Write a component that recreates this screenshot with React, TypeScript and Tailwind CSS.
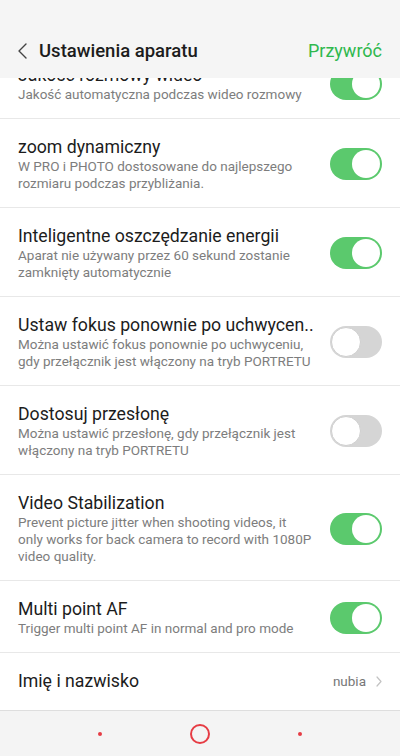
import { FC } from "react";

interface Setting {
  title: string;
  desc: string;
  on: boolean;
}

const SETTINGS: Setting[] = [
  {
    title: "Jakość rozmowy wideo",
    desc: "Jakość automatyczna podczas wideo rozmowy",
    on: true,
  },
  {
    title: "zoom dynamiczny",
    desc: "W PRO i PHOTO dostosowane do najlepszego rozmiaru podczas przybliżania.",
    on: true,
  },
  {
    title: "Inteligentne oszczędzanie energii",
    desc: "Aparat nie używany przez 60 sekund zostanie zamknięty automatycznie",
    on: true,
  },
  {
    title: "Ustaw fokus ponownie po uchwycen..",
    desc: "Można ustawić fokus ponownie po uchwyceniu, gdy przełącznik jest włączony na tryb PORTRETU",
    on: false,
  },
  {
    title: "Dostosuj przesłonę",
    desc: "Można ustawić przesłonę, gdy przełącznik jest włączony na tryb PORTRETU",
    on: false,
  },
  {
    title: "Video Stabilization",
    desc: "Prevent picture jitter when shooting videos, it only works for back camera to record with 1080P video quality.",
    on: true,
  },
  {
    title: "Multi point AF",
    desc: "Trigger multi point AF in normal and pro mode",
    on: true,
  },
];

const Toggle: FC<{ on: boolean }> = ({ on }) =>
  on ? (
    <div className="flex h-[32px] w-[52px] shrink-0 items-center justify-end rounded-full bg-[#5bc96d] p-[2px]">
      <div className="h-[28px] w-[28px] rounded-full bg-white" />
    </div>
  ) : (
    <div className="flex h-[32px] w-[52px] shrink-0 items-center justify-start rounded-full bg-[#d5d5d5] p-[1px]">
      <div className="h-[30px] w-[30px] rounded-full border border-[#cfcfcf] bg-white" />
    </div>
  );

export default function App() {
  return (
    <div
      className="flex h-[756px] w-[400px] flex-col overflow-hidden bg-white"
      style={{ fontFamily: "Roboto, 'Noto Sans', sans-serif" }}
    >
      {/* Header */}
      <div className="flex h-[78px] shrink-0 items-end justify-between bg-[#f5f5f5] px-[18px] pb-[15px]">
        <div className="flex items-center gap-[12px]">
          <svg width="9" height="16" viewBox="0 0 9 16" fill="none">
            <path d="M8 1L1 8l7 7" stroke="#444" strokeWidth="1.4" strokeLinecap="round" strokeLinejoin="round" />
          </svg>
          <span className="text-[18.5px] font-medium leading-[24px] text-[#1c1c1c]">Ustawienia aparatu</span>
        </div>
        <span className="text-[18px] leading-[24px] text-[#2fb84d]">Przywróć</span>
      </div>

      {/* List */}
      <div className="flex-1 overflow-hidden">
        <div className="-mt-[31px]">
          {SETTINGS.map((s) => (
            <div
              key={s.title}
              className="flex items-center justify-between border-b border-[#e8e8e8] pl-[18px] pr-[18px] pt-[17px] pb-[15px]"
            >
              <div className="w-[296px]">
                <div className="text-[17.7px] leading-[22px] text-[#1c1c1c]">{s.title}</div>
                <div className="text-[13.5px] leading-[17px] text-[#7d7d7d]">{s.desc}</div>
              </div>
              <Toggle on={s.on} />
            </div>
          ))}
          <div className="flex h-[58px] items-center justify-between border-b border-[#dedede] px-[18px]">
            <span className="text-[17.7px] text-[#1c1c1c]">Imię i nazwisko</span>
            <div className="flex items-center gap-[10px]">
              <span className="text-[13.5px] text-[#777]">nubia</span>
              <svg width="6" height="11" viewBox="0 0 6 11" fill="none">
                <path d="M1 1l4 4.5L1 10" stroke="#c2c2c2" strokeWidth="1.2" strokeLinecap="round" strokeLinejoin="round" />
              </svg>
            </div>
          </div>
        </div>
      </div>

      {/* Nav bar */}
      <div className="flex h-[45px] shrink-0 items-center justify-center gap-[88px] bg-[#f4f4f4]">
        <div className="h-[4px] w-[4px] rounded-full bg-[#e63c44]" />
        <div className="h-[20px] w-[20px] rounded-full border-2 border-[#e63c44]" />
        <div className="h-[4px] w-[4px] rounded-full bg-[#e63c44]" />
      </div>
    </div>
  );
}
